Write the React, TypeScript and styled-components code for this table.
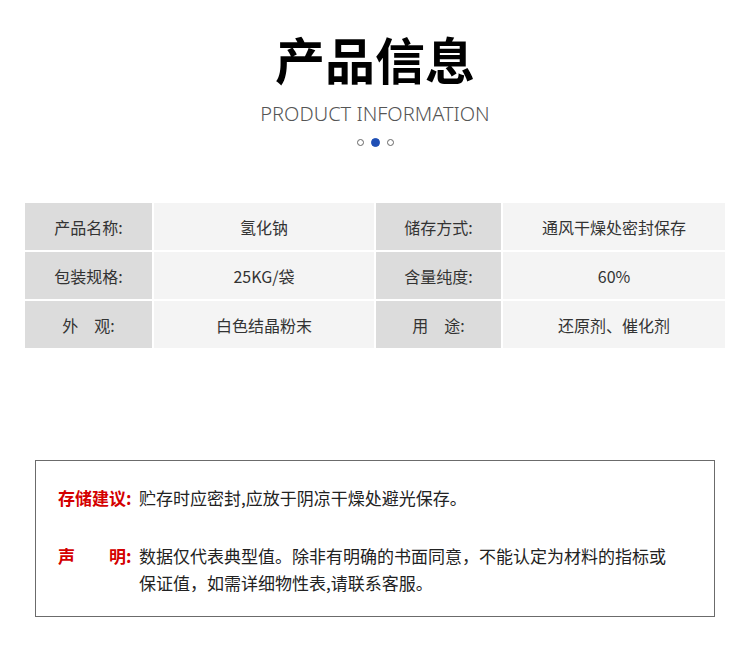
import React from "react";
import styled, { createGlobalStyle } from "styled-components";

const Global = createGlobalStyle`
  html, body { margin: 0; padding: 0; background: #fff; }
  body { font-family: "Noto Sans CJK SC", "Noto Sans", sans-serif; }
`;

const Page = styled.div`
  width: 750px;
  height: 655px;
  display: flex;
  flex-direction: column;
  align-items: center;
  overflow: hidden;
`;

const Title = styled.h1`
  margin: 24px 0 0;
  font-family: "Noto Sans CJK SC", sans-serif;
  font-weight: 700;
  font-size: 50px;
  line-height: 68px;
  color: #000;
`;

const SubTitle = styled.div`
  margin-top: 8px;
  height: 21px;
  overflow: hidden;
  font-family: "Noto Sans", sans-serif;
  font-weight: 300;
  font-size: 20px;
  line-height: 27px;
  color: #555;
  letter-spacing: 0px;
`;

const Dots = styled.div`
  margin-top: 17px;
  display: flex;
  gap: 7px;
  align-items: center;
`;

const Dot = styled.span<{ $active?: boolean }>`
  width: 7px;
  height: 7px;
  border-radius: 50%;
  box-sizing: border-box;
  border: 1px solid ${(p) => (p.$active ? "#1f4fb5" : "#666")};
  background: ${(p) => (p.$active ? "#1f4fb5" : "#fff")};
  ${(p) => (p.$active ? "width: 9px; height: 9px;" : "")}
`;

const Table = styled.div`
  margin-top: 56px;
  width: 700px;
  display: grid;
  grid-template-columns: 127px 220px 125px 222px;
  grid-auto-rows: 47px;
  gap: 2px;
  align-self: flex-start;
  margin-left: 25px;
`;

const Cell = styled.div<{ $label?: boolean }>`
  display: flex;
  align-items: center;
  justify-content: center;
  background: ${(p) => (p.$label ? "#dcdcdc" : "#f4f4f4")};
  font-family: "Noto Sans CJK SC", sans-serif;
  font-weight: 400;
  font-size: 16px;
  color: #333;
  white-space: pre;
`;

const Notice = styled.div`
  margin-top: 112px;
  align-self: flex-start;
  margin-left: 35px;
  width: 680px;
  height: 157px;
  box-sizing: border-box;
  border: 1px solid #6b6b6b;
  padding: 23px 0 0 22px;
  display: grid;
  grid-template-columns: 81px 1fr;
  row-gap: 31px;
  align-content: start;
`;

const NoteLabel = styled.div`
  color: #d40000;
  font-weight: 700;
  font-size: 17px;
  line-height: 27px;
  white-space: pre;
`;

const NoteText = styled.div`
  color: #222;
  font-size: 17px;
  line-height: 27px;
`;

const rows: [string, string, string, string][] = [
  ["产品名称:", "氢化钠", "储存方式:", "通风干燥处密封保存"],
  ["包装规格:", "25KG/袋", "含量纯度:", "60%"],
  ["外　观:", "白色结晶粉末", "用　途:", "还原剂、催化剂"],
];

export default function App() {
  return (
    <Page>
      <Global />
      <Title>产品信息</Title>
      <SubTitle>PRODUCT INFORMATION</SubTitle>
      <Dots>
        <Dot />
        <Dot $active />
        <Dot />
      </Dots>
      <Table>
        {rows.map((r, i) => (
          <React.Fragment key={i}>
            <Cell $label>{r[0]}</Cell>
            <Cell>{r[1]}</Cell>
            <Cell $label>{r[2]}</Cell>
            <Cell>{r[3]}</Cell>
          </React.Fragment>
        ))}
      </Table>
      <Notice>
        <NoteLabel>存储建议:</NoteLabel>
        <NoteText>贮存时应密封,应放于阴凉干燥处避光保存。</NoteText>
        <NoteLabel>{"声　　明:"}</NoteLabel>
        <NoteText>
          数据仅代表典型值。除非有明确的书面同意，不能认定为材料的指标或
          <br />
          保证值，如需详细物性表,请联系客服。
        </NoteText>
      </Notice>
    </Page>
  );
}
